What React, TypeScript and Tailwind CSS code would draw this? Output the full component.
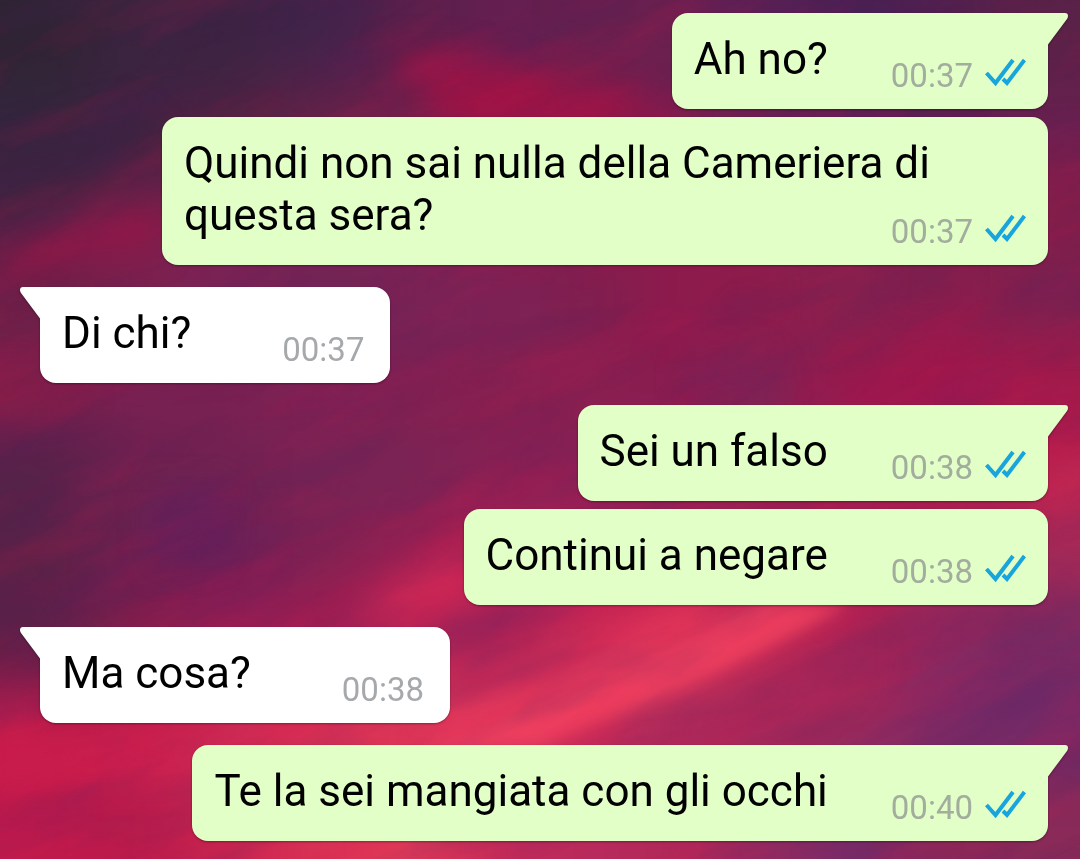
type Message = {
  id: number;
  text: string;
  time: string;
  sent: boolean;
  first: boolean; // first message of a group, gets the tail
};

const messages: Message[] = [
  { id: 1, text: 'Ah no?', time: '00:37', sent: true, first: true },
  { id: 2, text: 'Quindi non sai nulla della Cameriera di questa sera?', time: '00:37', sent: true, first: false },
  { id: 3, text: 'Di chi?', time: '00:37', sent: false, first: true },
  { id: 4, text: 'Sei un falso', time: '00:38', sent: true, first: true },
  { id: 5, text: 'Continui a negare', time: '00:38', sent: true, first: false },
  { id: 6, text: 'Ma cosa?', time: '00:38', sent: false, first: true },
  { id: 7, text: 'Te la sei mangiata con gli occhi', time: '00:40', sent: true, first: true },
];

// Sunset sky, one row of colours per band of the wallpaper
const sky = [
  ['#2f2433', '#3b2440', '#3c2342', '#40234a', '#52204c', '#661f50', '#62204f', '#6a204f', '#582055', '#482054', '#52204f', '#5a2248'],
  ['#34263f', '#3f2341', '#4a2342', '#6a2148', '#7c204c', '#981848', '#8f1a4a', '#7a2050', '#6a2050', '#601f55', '#5c1f50', '#6a2050'],
  ['#5a2048', '#74204a', '#7a2050', '#7a2050', '#80204e', '#8a1c4c', '#8a1c4c', '#8a1c4c', '#8a1c4c', '#80204e', '#80204e', '#861d4a'],
  ['#6b2048', '#802050', '#7a2358', '#6f2458', '#752458', '#7a2257', '#7c1f50', '#8f1a4c', '#8e1c4c', '#85224f', '#901c4c', '#7a2150'],
  ['#7d1f4c', '#7a2052', '#7a2052', '#802054', '#862050', '#862050', '#8a1f50', '#8a1c50', '#802255', '#9a174c', '#a3164c', '#a5184a'],
  ['#52224a', '#6b2250', '#702252', '#762455', '#762455', '#842055', '#8a2055', '#8a2055', '#95204f', '#a01a50', '#a81c50', '#b8204f'],
  ['#5a2248', '#6b2050', '#651f59', '#7f2152', '#981f52', '#b01f52', '#b82055', '#b02055', '#a82055', '#a82055', '#a42555', '#a02a58'],
  ['#5a204a', '#8a1c4c', '#a81c50', '#b01c52', '#b82255', '#a82358', '#cc2c56', '#d83358', '#b82350', '#ae2252', '#8a2860', '#742a64'],
  ['#c01848', '#c81f4f', '#d02a55', '#dc3055', '#de3858', '#d8385c', '#c02a58', '#a82a5c', '#a02a5a', '#9a2a5c', '#7a2a68', '#6f2a68'],
  ['#c01a4c', '#b51c4c', '#c82450', '#d83055', '#e03a58', '#c42a58', '#b82a5c', '#b02858', '#9a2a60', '#722a68', '#8a2858', '#8a2a58'],
];

function Wallpaper() {
  return (
    <svg
      className="absolute inset-0 h-full w-full"
      viewBox="0 0 1080 859"
      preserveAspectRatio="xMidYMid slice"
      aria-hidden="true"
    >
      <defs>
        <filter id="sky-blur" x="-10%" y="-10%" width="120%" height="120%" colorInterpolationFilters="sRGB">
          <feGaussianBlur stdDeviation="34" />
        </filter>
        <filter id="cloud-blur" x="-30%" y="-60%" width="160%" height="220%" colorInterpolationFilters="sRGB">
          <feGaussianBlur stdDeviation="16" />
        </filter>
        <filter id="streak-blur" x="-30%" y="-60%" width="160%" height="220%" colorInterpolationFilters="sRGB">
          <feGaussianBlur stdDeviation="7" />
        </filter>
        {/* wispy light and dark bands running along the clouds */}
        <filter id="wisps-light" x="0" y="0" width="100%" height="100%" colorInterpolationFilters="sRGB">
          <feTurbulence type="fractalNoise" baseFrequency="0.006 0.022" numOctaves="4" seed="7" />
          <feColorMatrix values="0 0 0 0 0.9  0 0 0 0 0.1  0 0 0 0 0.3  2.4 0 0 0 -1.1" />
        </filter>
        <filter id="wisps-dark" x="0" y="0" width="100%" height="100%" colorInterpolationFilters="sRGB">
          <feTurbulence type="fractalNoise" baseFrequency="0.006 0.02" numOctaves="4" seed="21" />
          <feColorMatrix values="0 0 0 0 0.3  0 0 0 0 0.13  0 0 0 0 0.38  2.4 0 0 0 -1.1" />
        </filter>
      </defs>
      <rect width="1080" height="859" fill="#7a2152" />
      <g filter="url(#sky-blur)">
        {sky.map((row, y) =>
          row.map((color, x) => (
            <rect
              key={`${x}-${y}`}
              x={x === 0 ? -90 : x * 90}
              y={y === 0 ? -86 : y * 86}
              width={x === 0 || x === 11 ? 181 : 91}
              height={y === 0 || y === 9 ? 173 : 87}
              fill={color}
            />
          ))
        )}
      </g>
      <g filter="url(#cloud-blur)">
        {/* upper clouds */}
        <path d="M385 50 L470 55 L560 85 L680 105 L680 125 L450 125 L420 90 Z" fill="#a81244" opacity="0.8" />
        <path d="M-20 262 L60 235 L160 200 L160 250 L20 278 Z" fill="#9c1448" opacity="0.6" />
        <path d="M-20 150 L130 110 L160 140 L60 195 L-20 225 Z" fill="#38243f" opacity="0.7" />
        {/* middle clouds */}
        <path d="M-20 370 L60 385 L90 400 L-20 418 Z" fill="#8c1c46" opacity="0.6" />
        <path d="M690 360 L760 350 L785 400 L690 402 Z" fill="#6f2458" opacity="0.5" />
        <path d="M900 270 L950 265 L960 285 L910 300 Z" fill="#6a2350" opacity="0.5" />
        <path d="M150 490 L225 490 L220 555 L155 570 Z" fill="#622060" opacity="0.5" />
        <path d="M1045 470 L1100 455 L1100 530 L1045 530 Z" fill="#c82d55" opacity="0.6" />
        {/* lower clouds */}
        <path d="M340 615 L400 580 L470 545 L480 600 L400 622 Z" fill="#d62a58" opacity="0.8" />
        <path d="M440 695 L600 645 L680 600 L850 600 L760 655 L660 695 L560 740 L430 760 Z" fill="#e83a5c" opacity="0.7" />
        <path d="M650 735 L760 670 L850 630 L880 660 L800 745 L620 750 Z" fill="#a8285c" opacity="0.5" />
        <path d="M-20 700 L30 680 L50 725 L190 745 L190 780 L40 790 L-20 790 Z" fill="#d62450" opacity="0.4" />
      </g>
      <g filter="url(#streak-blur)">
        <path d="M430 745 L560 705 L650 660 L760 605 L850 605 L740 660 L640 705 L540 745 Z" fill="#f4425f" opacity="0.7" />
        <path d="M448 640 L540 622 L600 606 L540 606 L448 618 Z" fill="#94225a" opacity="0.5" />
        <path d="M450 710 L560 672 L640 628 L600 640 L540 655 L450 680 Z" fill="#c42656" opacity="0.5" />
      </g>
      <g transform="rotate(-24 540 430)">
        <rect x="-160" y="-200" width="1400" height="1260" filter="url(#wisps-light)" opacity="0.16" />
        <rect x="-160" y="-200" width="1400" height="1260" filter="url(#wisps-dark)" opacity="0.2" />
      </g>
    </svg>
  );
}

function Ticks() {
  return (
    <svg
      className="h-10 w-[41px]"
      viewBox="0 0 41 40"
      fill="none"
      stroke="#18a5dc"
      strokeWidth="4"
      role="img"
      aria-label="Letto"
    >
      <path d="M1.500 17 L10.500 27 L28 4" />
      <path d="M18 23 L22 27 L39.500 4" />
    </svg>
  );
}

function Tail({ sent }: { sent: boolean }) {
  return sent ? (
    <svg className="-ml-px h-8 w-[21px] shrink-0" viewBox="0 0 21 32" fill="#e1ffc7" aria-hidden="true">
      <path d="M0 0 H18 Q21 0 21 3 Q21 4.500 20 6 L1 31.500 H0 Z" />
    </svg>
  ) : (
    <svg className="-mr-px h-8 w-[21px] shrink-0" viewBox="0 0 21 32" fill="#ffffff" aria-hidden="true">
      <path d="M21 0 H3 Q0 0 0 3 Q0 4.500 1 6 L20 31.500 H21 Z" />
    </svg>
  );
}

function Bubble({ message }: { message: Message }) {
  const { text, time, sent, first } = message;

  if (sent) {
    return (
      <li
        className={`flex justify-end pl-[162px] drop-shadow-[0_1px_1px_rgba(0,0,0,0.35)] first:mt-0 ${
          first ? 'mt-[22px] pr-3' : 'mt-2 pr-8'
        }`}
      >
        <div
          className={`flow-root rounded-2xl bg-[#e1ffc7] pt-5 pr-[22px] pb-[13px] pl-[22px] ${
            first ? 'rounded-tr-none' : ''
          }`}
        >
          <span>{text}</span>
          <span className="float-right mt-[23px] ml-[63px] flex gap-3 text-[33px] leading-10 text-[#a2ad9e]">
            <time>{time}</time>
            <Ticks />
          </span>
        </div>
        {first && <Tail sent />}
      </li>
    );
  }

  return (
    <li className="mt-[22px] flex pr-[162px] pl-5 drop-shadow-[0_1px_1px_rgba(0,0,0,0.35)]">
      {first && <Tail sent={false} />}
      <div className="flow-root rounded-2xl rounded-tl-none bg-white pt-5 pr-[26px] pb-[13px] pl-[22px]">
        <span>{text}</span>
        <time className="float-right mt-[23px] ml-[91px] text-[33px] leading-10 text-[#a6a9ab]">{time}</time>
      </div>
    </li>
  );
}

export default function App() {
  return (
    <main className="relative min-h-screen overflow-hidden bg-[#7a2152] font-[Roboto,sans-serif]">
      <Wallpaper />
      <ul className="relative pt-[13px] pb-[18px] text-[44px] leading-[52px] text-black">
        {messages.map((message) => (
          <Bubble key={message.id} message={message} />
        ))}
      </ul>
    </main>
  );
}
